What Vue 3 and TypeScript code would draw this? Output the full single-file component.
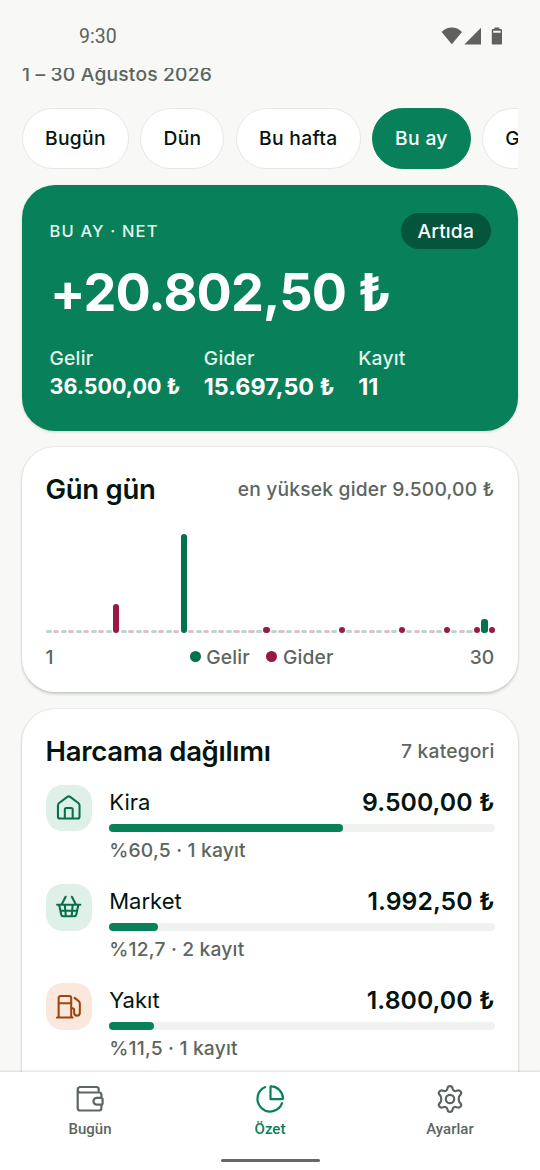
<script setup lang="ts">
interface Category {
  name: string
  amount: string
  share: number
  note: string
  icon: 'home' | 'basket' | 'fuel'
}

const periods = ['Bugün', 'Dün', 'Bu hafta', 'Bu ay', 'Geçen ay']
const activePeriod = 'Bu ay'

const totals = [
  { label: 'Gelir', value: '36.500,00 ₺', size: 21.5 },
  { label: 'Gider', value: '15.697,50 ₺', size: 23.3 },
  { label: 'Kayıt', value: '11', size: 23.4 },
]

const income: Record<number, number> = { 10: 99, 30: 14 }
const expense: Record<number, number> = { 5: 29, 15: 5.5, 20: 5.5, 24: 5.5, 27: 5.5, 29: 5.5, 30: 5.5 }

const bars = Array.from({ length: 30 }, (_, i) => i + 1).flatMap((day) => [
  { key: `${day}-in`, kind: 'in', height: income[day] ?? 0 },
  { key: `${day}-out`, kind: 'out', height: expense[day] ?? 0 },
])

const categories: Category[] = [
  { name: 'Kira', amount: '9.500,00 ₺', share: 60.5, note: '%60,5 · 1 kayıt', icon: 'home' },
  { name: 'Market', amount: '1.992,50 ₺', share: 12.7, note: '%12,7 · 2 kayıt', icon: 'basket' },
  { name: 'Yakıt', amount: '1.800,00 ₺', share: 11.5, note: '%11,5 · 1 kayıt', icon: 'fuel' },
]
</script>

<template>
  <div class="screen">
    <header class="status">
      <span class="clock">9:30</span>
      <svg class="status-icons" width="62" height="18" viewBox="0 0 62 18">
        <path d="M.6 4.900C6.400-.9 15.200-.9 21 4.900L10.800 17.200z" />
        <path d="M40 .8V17.500H23.300z" />
        <path fill-rule="evenodd" d="M53.400.5h5v1.600h1.500c.7 0 1.100.4 1.100 1.100v13.200c0 .7-.4 1.100-1.100 1.100h-8c-.7 0-1.100-.4-1.100-1.100V3.200c0-.7.4-1.100 1.100-1.100h1.500zM52.200 3.800v1.900h7.400V3.800z" />
      </svg>
    </header>

    <main class="content">
      <p class="range">1 – 30 Ağustos 2026</p>

      <div class="chips">
        <button v-for="p in periods" :key="p" class="chip" :class="{ active: p === activePeriod }">{{ p }}</button>
      </div>

      <section class="hero">
        <div class="hero-top">
          <span class="eyebrow">BU AY · NET</span>
          <span class="badge">Artıda</span>
        </div>
        <div class="net">+20.802,50 ₺</div>
        <div class="totals">
          <div v-for="t in totals" :key="t.label" class="total">
            <span class="total-label">{{ t.label }}</span>
            <span class="total-value" :style="{ fontSize: t.size + 'px' }">{{ t.value }}</span>
          </div>
        </div>
      </section>

      <section class="card daily">
        <div class="card-head">
          <h2>Gün gün</h2>
          <span class="hint">en yüksek gider 9.500,00 ₺</span>
        </div>
        <div class="chart">
          <i
            v-for="b in bars"
            :key="b.key"
            class="bar"
            :class="[b.kind, { empty: !b.height }]"
            :style="{ height: (b.height || 2.8) + 'px' }"
          ></i>
        </div>
        <div class="axis">
          <span>1</span>
          <span class="legend">
            <span class="key"><i class="dot in"></i>Gelir</span>
            <span class="key"><i class="dot out"></i>Gider</span>
          </span>
          <span>30</span>
        </div>
      </section>

      <section class="card spending">
        <div class="card-head">
          <h2>Harcama dağılımı</h2>
          <span class="hint">7 kategori</span>
        </div>
        <div v-for="c in categories" :key="c.name" class="row">
          <span class="tile" :class="c.icon">
            <svg v-if="c.icon === 'home'" viewBox="0 0 26 26">
              <path d="M2 10.600c0-1 .4-1.800 1.200-2.400l8.400-6.300a2.300 2.300 0 0 1 2.800 0l8.400 6.300c.8.600 1.200 1.400 1.200 2.400v11.200a2.200 2.200 0 0 1-2.200 2.200H4.200A2.200 2.200 0 0 1 2 21.800zM9 24v-9.200c0-.9.6-1.500 1.500-1.500h5c.9 0 1.500.6 1.500 1.500V24" />
            </svg>
            <svg v-else-if="c.icon === 'basket'" viewBox="0 0 26 26">
              <path d="M1.200 11h23.600M3.200 11l2.100 9.900c.2 1.200.9 1.800 2.100 1.800h11.200c1.200 0 1.900-.6 2.100-1.800L22.800 11M4.400 17h17.200M9 11l1 11.500M17 11l-1 11.500M5.600 11l4.200-8.200M20.400 11l-4.200-8.200" />
            </svg>
            <svg v-else viewBox="0 0 26 26">
              <path d="M2.700 24V4.200C2.700 2.800 3.500 2 4.900 2h8.400c1.400 0 2.200.8 2.200 2.200V24M1 24h16M2.700 9.500h12.800M15.500 14.600h1.200c1.100 0 1.800.7 1.800 1.800v2.800a2.900 2.900 0 0 0 5.800 0V9.800c0-1-.3-1.700-1-2.400L19 4" />
            </svg>
          </span>
          <div class="row-body">
            <div class="row-top">
              <span class="name">{{ c.name }}</span>
              <span class="amount">{{ c.amount }}</span>
            </div>
            <div class="track"><div class="fill" :style="{ width: c.share + '%' }"></div></div>
            <div class="note">{{ c.note }}</div>
          </div>
        </div>
      </section>
    </main>

    <nav class="tabs">
      <a class="tab">
        <svg viewBox="0 0 30 30">
          <path d="M23.700 8.500V5.200a2.200 2.200 0 0 0-2.200-2.200H5a2.800 2.800 0 0 0-2.300 2.800M2.700 5.800A2.700 2.700 0 0 0 5 8.500h19.200a2.200 2.200 0 0 1 2.200 2.200v3M26.400 21v3.300a2.200 2.200 0 0 1-2.200 2.200H5.300a2.600 2.600 0 0 1-2.600-2.600V5.800M21.800 13.900h4.400c.9 0 1.400.5 1.400 1.400v3.900c0 .9-.5 1.400-1.400 1.400h-4.400a3.350 3.350 0 0 1 0-6.700z" />
        </svg>
        <span>Bugün</span>
      </a>
      <a class="tab current">
        <svg viewBox="0 0 30 30">
          <path d="M10.200 3.100a12.700 12.700 0 1 0 16.900 16.100M15.500 2.900c0-.6.4-.9.9-.8A13 13 0 0 1 28 14.200c.1.600-.2 1-.8 1H15.500z" />
        </svg>
        <span>Özet</span>
      </a>
      <a class="tab">
        <svg viewBox="0 0 30 30">
          <circle cx="15" cy="15" r="4.200" />
          <path d="M12.500 4.400c.4-3 4.600-3 5 0 .3 2.300 2.300 3.200 4.300 2.300 3.400-1.400 5.800 2.200 3.300 4.400-1.900 2-1.900 5.800 0 7.800 2.500 2.200.1 5.800-3.300 4.400-2-.9-4 0-4.300 2.300-.4 3-4.600 3-5 0-.3-2.300-2.300-3.200-4.300-2.300-3.400 1.400-5.800-2.200-3.300-4.400 1.900-2 1.900-5.800 0-7.800-2.500-2.200-.1-5.800 3.300-4.400 2 .9 4 0 4.300-2.300z" />
        </svg>
        <span>Ayarlar</span>
      </a>
      <div class="handle"></div>
    </nav>
  </div>
</template>

<style>
body {
  margin: 0;
  background: #f8f9f7;
}
</style>

<style scoped>
* {
  box-sizing: border-box;
}
.screen {
  width: 540px;
  height: 1170px;
  display: flex;
  flex-direction: column;
  overflow: hidden;
  background: #f8f9f7;
  color: #04150f;
  font-family: Inter, "Noto Sans", sans-serif;
}
.status {
  flex: none;
  height: 68px;
  padding: 0 37px 0 79px;
  display: flex;
  justify-content: space-between;
  align-items: flex-start;
  color: #5f615f;
}
.clock {
  font: 400 19.500px/24px Roboto, sans-serif;
  margin-top: 24.500px;
}
.status-icons {
  margin-top: 26.500px;
  fill: #5f615f;
}
.content {
  flex: 1;
  min-height: 0;
  overflow: hidden;
  padding: 0 22px;
}
.range {
  margin: -7px 0 0;
  font-size: 19.250px;
  font-weight: 450;
  line-height: 27px;
  letter-spacing: .18px;
  color: #5d6560;
}
.chips {
  display: flex;
  gap: 11.500px;
  margin-top: 20px;
  overflow: hidden;
}
.chip {
  flex: none;
  height: 60.500px;
  padding: 0 22px;
  border: 1.375px solid #e6e8e6;
  border-radius: 31px;
  background: #fff;
  color: #04150f;
  font: 500 19.250px/24px Inter, sans-serif;
  letter-spacing: .32px;
}
.chip.active {
  background: #08815a;
  border-color: #08815a;
  color: #fff;
}
.hero {
  height: 245.500px;
  margin-top: 16.500px;
  padding: 27px 27.500px 0;
  border-radius: 33px;
  background: #08815a;
  color: #fff;
  box-shadow: 0 1px 3px rgba(0, 30, 20, .16);
}
.hero-top {
  display: flex;
  justify-content: space-between;
  align-items: center;
  height: 37px;
}
.eyebrow {
  font-size: 16.500px;
  font-weight: 500;
  letter-spacing: 1.150px;
  color: #e2f4ec;
}
.badge {
  height: 36px;
  padding: 0 16.500px;
  border-radius: 18px;
  background: #04553c;
  font-size: 19.250px;
  font-weight: 500;
  line-height: 36px;
  letter-spacing: .15px;
}
.net {
  margin: 10.500px 0 0 .5px;
  font-size: 52.250px;
  font-weight: 700;
  line-height: 64px;
  letter-spacing: -.87px;
  white-space: nowrap;
}
.totals {
  display: grid;
  grid-template-columns: repeat(3, 1fr);
  gap: 22px;
  margin-top: 20px;
}
.total {
  display: flex;
  flex-direction: column;
  white-space: nowrap;
}
.total-label {
  font-size: 19.250px;
  font-weight: 500;
  line-height: 28px;
  letter-spacing: .2px;
  color: #e2f4ec;
}
.total-value {
  font-weight: 700;
  line-height: 29px;
}
.card {
  margin-top: 16.500px;
  padding: 23px 23.500px 0;
  border-radius: 33px;
  background: #fff;
  box-shadow: 0 0 0 1px rgba(0, 30, 20, .03), 0 1.500px 3px rgba(0, 30, 20, .2);
}
.daily {
  height: 245px;
}
.spending {
  height: 480px;
  padding-top: 23.600px;
}
.card-head {
  display: flex;
  justify-content: space-between;
  align-items: center;
  height: 37px;
}
h2 {
  margin: 0;
  font-size: 27.500px;
  font-weight: 600;
  letter-spacing: -.3px;
}
.hint {
  font-size: 19.250px;
  font-weight: 450;
  letter-spacing: .18px;
  color: #5d6560;
}
.chart {
  display: flex;
  align-items: flex-end;
  gap: 1.400px;
  height: 99px;
  margin: 26.500px -.5px 0 0;
}
.bar {
  flex: 1;
  border-radius: 3px;
}
.in {
  background: #04704c;
}
.out {
  background: #981a42;
}
.empty {
  opacity: .28;
}
.axis {
  display: flex;
  justify-content: space-between;
  align-items: center;
  margin-top: 10px;
  font-size: 19.250px;
  font-weight: 450;
  line-height: 28px;
  letter-spacing: .18px;
  color: #5d6560;
}
.legend {
  display: flex;
  gap: 16.500px;
}
.key {
  display: flex;
  align-items: center;
  gap: 5.500px;
}
.dot {
  width: 11px;
  height: 11px;
  border-radius: 50%;
}
.row {
  display: flex;
  gap: 17px;
  height: 99.200px;
  padding-top: 15.500px;
}
.tile {
  flex: none;
  display: grid;
  place-items: center;
  width: 46.750px;
  height: 46.750px;
  border-radius: 16.500px;
  background: #def0e7;
  color: #04704c;
}
.tile.fuel {
  background: #fbe8dc;
  color: #9c450c;
}
.tile svg {
  width: 25.500px;
  height: 25.500px;
  fill: none;
  stroke: currentColor;
  stroke-width: 2.100;
  stroke-linecap: round;
  stroke-linejoin: round;
}
.row-body {
  flex: 1;
}
.row-top {
  display: flex;
  justify-content: space-between;
  align-items: center;
  height: 34px;
}
.name {
  font-size: 22px;
}
.amount {
  font-size: 24.750px;
  font-weight: 600;
  letter-spacing: .05px;
}
.track {
  height: 8.250px;
  margin: 5px -.5px 0 0;
  border-radius: 5px;
  background: #f0f2f0;
}
.fill {
  height: 100%;
  border-radius: 5px;
  background: #08815a;
}
.note {
  margin-top: 5px;
  font-size: 19.250px;
  font-weight: 450;
  line-height: 27px;
  letter-spacing: .18px;
  color: #5d6560;
}
.tabs {
  position: relative;
  flex: none;
  display: flex;
  height: 98.500px;
  padding-top: 12px;
  background: #fff;
  box-shadow: 0 -1px 2px rgba(0, 30, 20, .14);
}
.tab {
  flex: 1;
  display: flex;
  flex-direction: column;
  align-items: center;
  color: #5d6560;
  font: 500 15px/20px Roboto, sans-serif;
}
.tab svg {
  width: 30px;
  height: 30px;
  margin-bottom: 5.500px;
  fill: none;
  stroke: currentColor;
  stroke-width: 2.200;
  stroke-linecap: round;
  stroke-linejoin: round;
}
.tab.current {
  color: #08815a;
}
.handle {
  position: absolute;
  left: 220.500px;
  bottom: 8px;
  width: 99px;
  height: 3px;
  border-radius: 2px;
  background: #666;
}
</style>
